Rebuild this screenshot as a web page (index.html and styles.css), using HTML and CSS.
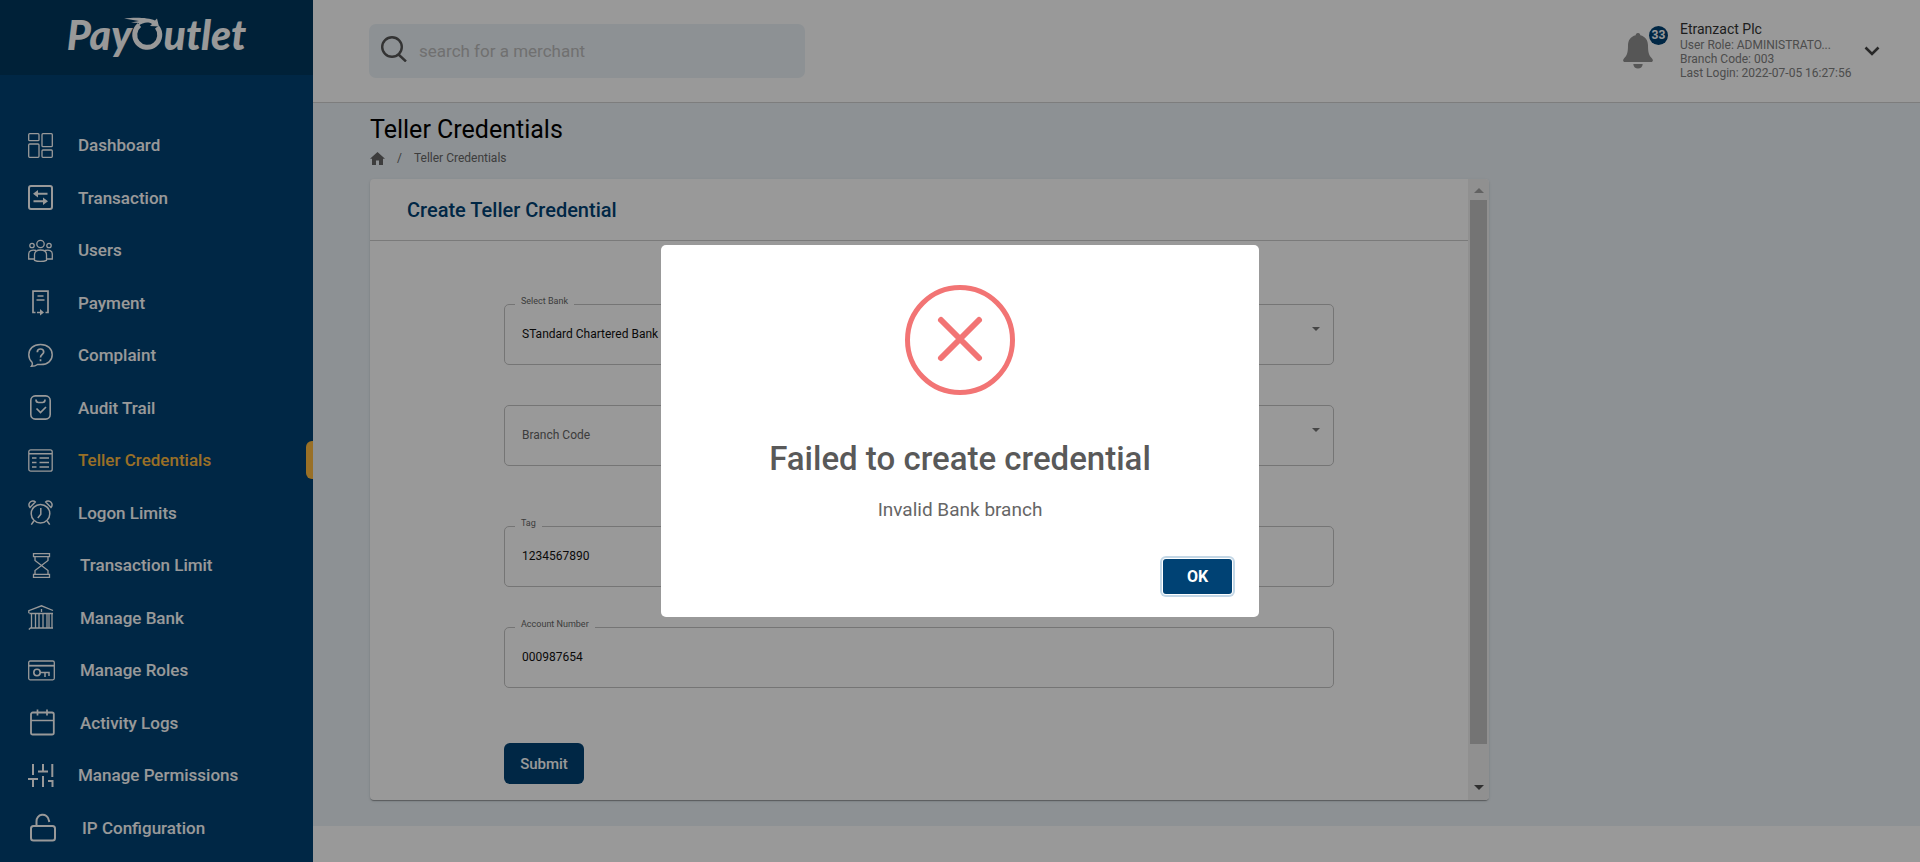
FILE: index.html
```html
<!DOCTYPE html>
<html lang="en">
<head>
<meta charset="utf-8">
<meta name="viewport" content="width=device-width, initial-scale=1">
<title>PayOutlet - Teller Credentials</title>
<link rel="stylesheet" href="styles.css">
</head>
<body>
<div class="app">
  <aside class="sidebar">
    <a class="brand" href="#" aria-label="PayOutlet">
      <span>Pay</span>
      <svg class="brand-ring" viewBox="0 0 40 34" aria-hidden="true">
        <path d="M33 10A12.500 12.500 0 1 1 15.500 8" fill="none" stroke="#fff" stroke-width="5"/>
        <path d="M0 1.500C10 .3 24 .3 31 3.500L33 1.500l2 8-9-.5 2-2C24 4.500 19 5.500 14 9L15 6 7 5.500l8-1.500z" fill="#fff"/>
      </svg>
      <span>utlet</span>
    </a>
    <nav class="nav" aria-label="Main">
      <a class="nav-link" href="#"><svg class="icon" viewBox="0 0 25 25"><rect x=".7" y=".7" width="10.300" height="7" rx="1"/><rect x=".7" y="11" width="10.300" height="13.300" rx="1"/><rect x="14" y=".7" width="10.300" height="13" rx="1"/><rect x="14" y="17" width="10.300" height="7.300" rx="1"/></svg>Dashboard</a>
      <a class="nav-link" href="#"><svg class="icon" viewBox="0 0 25 25"><rect x="1" y="1" width="23" height="23" rx="2" stroke-width="2"/><path d="M8 8.800h11.500M5.500 16.200H17" stroke-width="2"/><path d="M5 8.800l5-3.800v7.600zM20 16.200l-5-3.800V20z" class="solid"/></svg>Transaction</a>
      <a class="nav-link" href="#"><svg class="icon" viewBox="0 0 25 25"><circle cx="12.500" cy="6" r="3.700"/><circle cx="4" cy="7.500" r="2.200"/><circle cx="21" cy="7.500" r="2.200"/><path d="M6.500 22.300v-5.500c0-3 2-4.800 6-4.800s6 1.800 6 4.800v5.500c-3 1.500-9 1.500-12 0zM8 12.500C4 11.500.7 12.500.7 16v5H6M17 12.500c4-1 7.300 0 7.300 3.500v5H19"/></svg>Users</a>
      <a class="nav-link" href="#"><svg class="icon" viewBox="0 0 25 25"><path d="M7.500 22.500H5V1.200h15v21.300h-2.500" stroke-width="1.700"/><path d="M9.500 6h6M8.500 10h8M9 22.500h5" stroke-width="1.700"/><path d="M12 19l4 3.500-4 3z" class="solid"/></svg>Payment</a>
      <a class="nav-link" href="#"><svg class="icon" viewBox="0 0 25 25"><path d="M4 19.200C1.800 17.200.8 14.600.8 11.800.8 5.800 5.300 1.500 12.500 1.500s11.700 4.300 11.700 10.200S19.700 21.500 13 21.500H9.500c-1.500 1.200-3.500 1.800-6 1.800C4.500 22 4.800 20.500 4 19.200z" stroke-width="1.500"/><path d="M9.300 9.200c0-2 1.400-3.200 3.200-3.200s3.200 1.200 3.200 3c0 2.200-3.200 2.700-3.200 5.500M12.500 16.200v2" stroke-width="1.700"/></svg>Complaint</a>
      <a class="nav-link" href="#"><svg class="icon" viewBox="0 0 25 25"><rect x="2.800" y=".9" width="19.400" height="23.200" rx="4.500" stroke-width="1.600"/><path d="M8 4.500c0 2 .8 3 2.500 3h4c1.700 0 2.500-1 2.500-3M8.500 13.500l4 4L18 12" stroke-width="1.700"/></svg>Audit Trail</a>
      <a class="nav-link active" href="#" aria-current="page"><svg class="icon" viewBox="0 0 25 25"><rect x=".8" y="1.800" width="23.400" height="21.400" rx="2"/><path d="M1 5.800h23M4 10h4.500M11.500 10H21M4 14.500h4.500M11.500 14.500H21M4 19h4.500M11.500 19H21" stroke-width="1.500"/></svg>Teller Credentials</a>
      <a class="nav-link" href="#"><svg class="icon" viewBox="0 0 25 25"><circle cx="12.500" cy="13.700" r="9.300" stroke-width="1.500"/><path d="M12.800 8v6.200l-3 3.800M5.800 21l-2.500 3.700M19.200 21l2.500 3.700M2 7.500C.5 6 .6 3.500 2 2.200S6 .4 7.300 2zM23 7.500c1.500-1.500 1.400-4 0-5.300S19 .4 17.700 2z" stroke-width="1.500"/></svg>Logon Limits</a>
      <a class="nav-link" href="#"><svg class="icon wide" viewBox="0 0 27 25"><path d="M5.500.7h16v3h-16zM5.500 21.300h16v3h-16zM7 3.700v3.800l6.500 5L20 7.500V3.700M7 21.300v-3.800l6.500-5 6.500 5v3.800"/></svg>Transaction Limit</a>
      <a class="nav-link" href="#"><svg class="icon wide" viewBox="0 0 27 25"><path d="M25 5.500L13.500.8.8 5.700v2.500M25 8.500H1.500M3.500 9v14M7.500 9v14M11 9v14M15 9v14M19 9v14M24 9v14M21 9v14M25 23H2.500L.8 24.500M13.500 4v3"/></svg>Manage Bank</a>
      <a class="nav-link" href="#"><svg class="icon wide" viewBox="0 0 27 25"><rect x=".7" y="3" width="25.600" height="18.800" rx="1.500"/><path d="M1 7.700h25" stroke-width="1.800"/><circle cx="9" cy="14.500" r="3.200" stroke-width="1.600"/><path d="M12.300 14.500H21V18M17 14.500V19" stroke-width="1.500"/></svg>Manage Roles</a>
      <a class="nav-link" href="#"><svg class="icon wide" viewBox="0 0 27 25"><rect x="3" y="2.500" width="22.800" height="22" rx="1.800" stroke-width="1.800"/><path d="M3 10.500h23M9.500-.5v6M19 -.5v6" stroke-width="1.700"/></svg>Activity Logs</a>
      <a class="nav-link" href="#"><svg class="icon" viewBox="0 0 25 25"><path d="M5 1v11M0 16h10M5 16v8M15 1v7M10 8.500h10M15 13v11M24.300 1v13M20 18h4.500v6" stroke-width="2"/></svg>Manage Permissions</a>
      <a class="nav-link" href="#"><svg class="icon wider" viewBox="0 0 29 25"><rect x="3" y="11" width="24" height="14.500" rx="2.500" stroke-width="2"/><path d="M8.500 11V6.500a6.200 6.200 0 0 1 12.300-1.500l.5 2" stroke-width="2"/></svg>IP Configuration</a>
    </nav>
  </aside>

  <div class="main">
    <header class="topbar">
      <label class="search">
        <svg class="search-icon" viewBox="0 0 26 26" aria-hidden="true"><circle cx="11" cy="11" r="9.800"/><path d="M17.500 18.500l7.500 7"/></svg>
        <input class="search-input" type="search" placeholder="search for a merchant" aria-label="Search for a merchant">
      </label>
      <div class="account">
        <button class="bell" type="button" aria-label="Notifications">
          <svg viewBox="0 0 30 36" aria-hidden="true"><path d="M15 0c1.600 0 2.300 1 2.300 2.300C22.500 3.500 25 7.500 25 12.500c0 7 1 10 4 13 1.500 1.800 1 3.500-1 3.500H2c-2 0-2.500-1.700-1-3.500 3-3 4-6 4-13C5 7.500 7.500 3.500 12.700 2.300 12.700 1 13.400 0 15 0zM10.300 31h9.400c-.2 3-2.200 4.500-4.700 4.500S10.500 34 10.300 31z"/></svg>
          <span class="badge">33</span>
        </button>
        <div class="account-info">
          <p class="account-name">Etranzact Plc</p>
          <p>User Role: ADMINISTRATO...</p>
          <p>Branch Code: 003</p>
          <p>Last Login: 2022-07-05 16:27:56</p>
        </div>
        <button class="account-toggle" type="button" aria-label="Account menu">
          <svg viewBox="0 0 16 10" aria-hidden="true"><path d="M1.500 1.500L8 8l6.500-6.500"/></svg>
        </button>
      </div>
    </header>

    <main class="content">
      <h1 class="page-title">Teller Credentials</h1>
      <nav class="crumbs" aria-label="Breadcrumb">
        <a href="#" aria-label="Home"><svg class="home" viewBox="0 0 15 13"><path d="M7.500 0L15 6.800h-2V13H9V8.500H6V13H2V6.800H0z"/></svg></a>
        <span>/</span>
        <span>Teller Credentials</span>
      </nav>
      <section class="card">
        <div class="card-main">
          <h2 class="card-title">Create Teller Credential</h2>
          <form class="form">
            <div class="field">
              <label class="field-label" for="bank">Select Bank</label>
              <select class="control" id="bank"><option>STandard Chartered Bank</option></select>
              <span class="caret"></span>
            </div>
            <div class="field">
              <select class="control empty" aria-label="Branch Code"><option>Branch Code</option></select>
              <span class="caret"></span>
            </div>
            <div class="field spaced">
              <label class="field-label" for="tag">Tag</label>
              <input class="control" id="tag" type="text" value="1234567890">
            </div>
            <div class="field">
              <label class="field-label" for="account">Account Number</label>
              <input class="control" id="account" type="text" value="000987654">
            </div>
            <button class="submit" type="submit">Submit</button>
          </form>
        </div>
        <div class="scrollbar" aria-hidden="true">
          <span class="arrow up"></span>
          <span class="track"><span class="thumb"></span></span>
          <span class="arrow down"></span>
        </div>
      </section>
    </main>
    <footer class="footer"></footer>
  </div>
</div>

<div class="overlay">
  <div class="modal" role="alertdialog" aria-labelledby="modal-title" aria-describedby="modal-text">
    <svg class="modal-icon" viewBox="0 0 110 110" aria-hidden="true"><circle cx="55" cy="55" r="52.500"/><path d="M36 35l38 38M74 35l-38 38" stroke-width="6"/></svg>
    <h2 class="modal-title" id="modal-title">Failed to create credential</h2>
    <p class="modal-text" id="modal-text">Invalid Bank branch</p>
    <button class="modal-ok" type="button">OK</button>
  </div>
</div>
</body>
</html>
```
FILE: styles.css
```css
* {
  box-sizing: border-box;
}

body {
  margin: 0;
  font-family: Roboto, "Liberation Sans", sans-serif;
  color: #000;
}

h1, h2, p {
  margin: 0;
}

button, input, select {
  font-family: inherit;
}

a {
  color: inherit;
  text-decoration: none;
}

.app {
  display: flex;
  min-height: 100vh;
}

/* Sidebar */
.sidebar {
  flex: 0 0 313px;
  display: flex;
  flex-direction: column;
  background: #004274;
  color: #fff;
}

.brand {
  display: flex;
  justify-content: center;
  height: 75px;
  padding-top: 11px;
  background: #00375e;
  font: italic 900 41px/48px Lato, sans-serif;
}

.brand-ring {
  width: 40px;
  height: 34px;
  margin: 6px 0 0 -8px;
}

.nav {
  flex: 1;
  display: grid;
  grid-auto-rows: 1fr;
  padding: 44px 0 8px;
}

.nav-link {
  position: relative;
  display: flex;
  align-items: center;
  gap: 25px;
  padding-left: 28px;
  font-size: 17px;
  font-weight: 500;
}

.nav-link.active {
  color: #ffbb40;
}

.nav-link.active::after {
  content: "";
  position: absolute;
  right: 0;
  width: 7px;
  height: 38px;
  border-radius: 6px 0 0 6px;
  background: #ffbb40;
}

.icon {
  width: 25px;
  height: 25px;
  overflow: visible;
  fill: none;
  stroke: #fff;
  stroke-width: 1.3;
}

.icon.wide {
  width: 27px;
}

.icon.wider {
  width: 29px;
}

.icon .solid {
  fill: #fff;
  stroke: none;
}

/* Top bar */
.main {
  flex: 1;
  min-width: 0;
  display: flex;
  flex-direction: column;
}

.topbar {
  display: flex;
  align-items: center;
  justify-content: space-between;
  height: 103px;
  padding: 0 32px 0 56px;
  border-bottom: 1px solid #d0d0d0;
}

.search {
  display: flex;
  align-items: center;
  gap: 12px;
  width: 436px;
  height: 54px;
  padding: 0 12px;
  border-radius: 7px;
  background: #ebf2f7;
}

.search-icon {
  width: 26px;
  height: 26px;
  margin-bottom: 4px;
  fill: none;
  stroke: #555;
  stroke-width: 2.4;
}

.search-input {
  flex: 1;
  min-width: 0;
  padding: 0;
  border: 0;
  outline: 0;
  background: none;
  font-size: 17px;
}

.search-input::placeholder {
  color: #bbb;
}

.account {
  display: flex;
  align-items: center;
}

.bell {
  position: relative;
  width: 30px;
  height: 36px;
  padding: 0;
  border: 0;
  margin-right: 27px;
  background: none;
}

.bell svg {
  display: block;
  fill: #8f8f8f;
}

.badge {
  position: absolute;
  top: -7px;
  left: 26px;
  width: 19px;
  height: 19px;
  border-radius: 50%;
  background: #004274;
  color: #fff;
  font-size: 12px;
  font-weight: 700;
  line-height: 19px;
}

.account-info {
  width: 176px;
  padding-bottom: 2px;
  color: #808080;
  font-size: 12px;
  line-height: 14px;
  white-space: nowrap;
}

.account-name {
  color: #333;
  font-size: 14px;
  line-height: 18px;
}

.account-toggle {
  width: 32px;
  height: 32px;
  padding: 8px;
  border: 0;
  background: none;
}

.account-toggle svg {
  display: block;
  fill: none;
  stroke: #444;
  stroke-width: 2.6;
}

/* Content */
.content {
  flex: 1;
  display: flex;
  flex-direction: column;
  padding: 12px 58px 26px 57px;
  background: #ebf2f7;
}

.page-title {
  font-size: 25px;
  font-weight: 400;
  line-height: 30px;
}

.crumbs {
  display: flex;
  align-items: center;
  gap: 12px;
  height: 24px;
  margin: 1px 0 9px;
  color: #666;
  font-size: 12px;
}

.home {
  display: block;
  width: 15px;
  height: 13px;
  fill: #666;
}

.card {
  flex: 1;
  display: flex;
  width: 75%;
  overflow: hidden;
  border-radius: 4px;
  background: #fff;
  box-shadow: 0 2px 1px -1px rgba(0, 0, 0, .2), 0 1px 1px rgba(0, 0, 0, .14), 0 1px 3px rgba(0, 0, 0, .12);
}

.card-main {
  flex: 1;
}

.card-title {
  padding: 16px 37px 15px;
  border-bottom: 1px solid #ccc;
  color: #004274;
  font-size: 20px;
  font-weight: 500;
  line-height: 30px;
}

.form {
  display: flex;
  flex-direction: column;
  align-items: stretch;
  gap: 40px;
  padding: 63px 134px 16px;
}

.field {
  position: relative;
}

.field.spaced {
  margin-top: 20px;
}

.field-label {
  position: absolute;
  top: -9px;
  left: 11px;
  padding: 0 6px;
  background: #fff;
  color: #666;
  font-size: 9px;
  line-height: 12px;
}

.control {
  display: block;
  width: 100%;
  height: 61px;
  padding: 0 17px 1px;
  border: 1px solid #c4c4c4;
  border-radius: 5px;
  appearance: none;
  background: #fff;
  color: #111;
  font-size: 12px;
}

.control.empty {
  color: #666;
}

.caret {
  position: absolute;
  top: 23px;
  right: 14px;
  border: 4px solid transparent;
  border-top-color: #757575;
  border-bottom: 0;
}

.submit {
  align-self: flex-start;
  width: 80px;
  height: 41px;
  margin-top: 15px;
  border: 0;
  border-radius: 6px;
  background: #004274;
  color: #fff;
  font-size: 15px;
  font-weight: 500;
}

.scrollbar {
  display: flex;
  flex-direction: column;
  width: 21px;
  background: #f1f1f1;
}

.arrow {
  height: 21px;
  display: grid;
  place-items: center;
}

.arrow::before {
  content: "";
  border: 5px solid transparent;
}

.arrow.up {
  padding-top: 2px;
}

.arrow.down {
  padding-bottom: 4px;
}

.arrow.up::before {
  border-top: 0;
  border-bottom-color: #a3a3a3;
}

.arrow.down::before {
  border-bottom: 0;
  border-top-color: #505050;
}

.track {
  flex: 1;
  padding: 0 2px;
}

.thumb {
  display: block;
  height: 94%;
  background: #c1c1c1;
}

.footer {
  height: 36px;
  background: #fff;
}

/* Alert */
.overlay {
  position: fixed;
  inset: 0;
  display: grid;
  place-items: center;
  background: rgba(0, 0, 0, .4);
}

.modal {
  display: flex;
  flex-direction: column;
  align-items: center;
  width: 598px;
  max-width: 100%;
  padding: 40px 27px 23px;
  border-radius: 5px;
  background: #fff;
}

.modal-icon {
  width: 110px;
  height: 110px;
  fill: none;
  stroke: #f27474;
  stroke-width: 5;
  stroke-linecap: round;
}

.modal-title {
  margin: 44px 0 19px;
  color: #595959;
  font-size: 33px;
  font-weight: 500;
  line-height: 40px;
}

.modal-text {
  color: #666;
  font-size: 19px;
  line-height: 24px;
}

.modal-ok {
  align-self: flex-end;
  width: 69px;
  height: 35px;
  margin-top: 37px;
  border: 0;
  border-radius: 3px;
  background: #004274;
  box-shadow: 0 0 0 1px #fff, 0 0 0 3px #c3d7e6;
  color: #fff;
  font-size: 16px;
  font-weight: 700;
}
```
